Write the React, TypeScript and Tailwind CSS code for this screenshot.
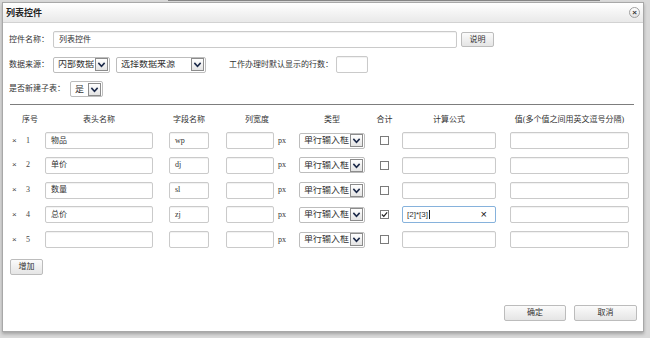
import React from "react";

const rows = [
  { n: 1, title: "物品", field: "wp", sum: false, formula: "" },
  { n: 2, title: "单价", field: "dj", sum: false, formula: "" },
  { n: 3, title: "数量", field: "sl", sum: false, formula: "" },
  { n: 4, title: "总价", field: "zj", sum: true, formula: "[2]*[3]" },
  { n: 5, title: "", field: "", sum: false, formula: "" },
];

function Chevron() {
  return (
    <svg width="9" height="9" viewBox="0 0 10 10" fill="none">
      <path d="M1.5 3.2 L5 7 L8.5 3.2" stroke="#1c2a4a" strokeWidth="1.7" />
    </svg>
  );
}

function Select({ className, text }: { className: string; text: string }) {
  return (
    <div className={`flex items-center h-[16px] border border-[#bdbdbd] rounded-[2px] bg-white pl-[4px] pr-[1px] ${className}`}>
      <span className="flex-1 text-[9px] leading-none text-[#333] whitespace-nowrap overflow-hidden">{text}</span>
      <span className="w-[13px] h-[13px] shrink-0 border border-[#8c8c8c] bg-gradient-to-b from-white to-[#e4e4e4] flex items-center justify-center">
        <Chevron />
      </span>
    </div>
  );
}

function Input({ className, value }: { className: string; value?: string }) {
  return (
    <div className={`h-[17px] border border-[#cacaca] rounded-[2px] bg-white shadow-[inset_0_1px_1px_rgba(0,0,0,0.06)] flex items-center pl-[5px] text-[8px] text-[#333] ${className}`}>
      {value}
    </div>
  );
}

function Button({ className, label }: { className: string; label: string }) {
  return (
    <div className={`border border-[#bcbcbc] rounded-[2px] bg-gradient-to-b from-[#fbfbfb] to-[#e5e5e5] flex items-center justify-center text-[8px] text-[#333] ${className}`}>
      {label}
    </div>
  );
}

function Checkbox({ checked }: { checked: boolean }) {
  return (
    <div className="w-[9px] h-[9px] border border-[#7b7b7b] bg-white flex items-center justify-center">
      {checked && (
        <svg width="7" height="7" viewBox="0 0 8 8" fill="none">
          <path d="M1 4 L3.2 6.2 L7 1.5" stroke="#222" strokeWidth="1.4" />
        </svg>
      )}
    </div>
  );
}

export default function App() {
  return (
    <div className="w-[650px] h-[338px] bg-[#d9d9d9] font-['Liberation_Serif','Noto_Sans_CJK_SC',serif] overflow-hidden">
      <div className="h-[2px] flex">
        <div className="ml-[168px] w-[432px] h-[1px] bg-[#858585]" />
      </div>
      <div className="ml-[2px] w-[642px] h-[330px] bg-white border border-[#a8a8a8] shadow-[0_2px_3px_rgba(0,0,0,0.25)] flex flex-col">
        {/* title bar */}
        <div className="h-[20px] shrink-0 flex items-center justify-between pl-[3px] pr-[3px] bg-gradient-to-b from-white to-[#e9e9e9] border-b border-[#d2d2d2]">
          <span className="text-[9px] font-bold text-[#222] font-['Noto_Sans_CJK_SC',sans-serif]">列表控件</span>
          <span className="w-[11px] h-[11px] rounded-full border border-[#a0a0a0] bg-gradient-to-b from-white to-[#e2e2e2] flex items-center justify-center text-[8px] leading-none text-[#333] font-bold font-['Liberation_Sans',sans-serif]">×</span>
        </div>

        <div className="flex-1 flex flex-col pl-[6px] pr-[6px] pt-[8px] text-[#333]">
          {/* control name */}
          <div className="flex items-center h-[17px]">
            <span className="w-[44px] text-[8px]">控件名称：</span>
            <Input className="w-[404px]" value="列表控件" />
            <Button className="ml-[4px] w-[33px] h-[15px]" label="说明" />
          </div>

          {/* data source */}
          <div className="flex items-center h-[17px] mt-[8px]">
            <span className="w-[44px] text-[8px]">数据来源：</span>
            <Select className="w-[57px]" text="内部数据" />
            <Select className="ml-[6px] w-[90px]" text="选择数据来源" />
            <span className="ml-[23px] text-[8px]">工作办理时默认显示的行数：</span>
            <Input className="ml-[3px] w-[32px]" />
          </div>

          {/* sub table */}
          <div className="flex items-center h-[16px] mt-[8px]">
            <span className="w-[61px] text-[8px]">是否新建子表：</span>
            <Select className="w-[33px]" text="是" />
          </div>

          <div className="mt-[7px] ml-[1px] w-[624px] h-[1px] bg-[#7d7d7d]" />

          {/* header */}
          <div className="flex items-center h-[16px] mt-[7px] text-[8px] pl-[1px]">
            <span className="w-[35px] pl-[12px]">序号</span>
            <span className="w-[108px] text-center">表头名称</span>
            <span className="ml-[16px] w-[40px] text-center">字段名称</span>
            <span className="ml-[17px] w-[62px] text-center">列宽度</span>
            <span className="ml-[11px] w-[66px] text-center">类型</span>
            <span className="ml-[11px] w-[17px] text-center">合计</span>
            <span className="ml-[9px] w-[94px] text-center">计算公式</span>
            <span className="ml-[14px] w-[119px] text-center">值(多个值之间用英文逗号分隔)</span>
          </div>

          {/* rows */}
          <div className="flex flex-col gap-[7.8px] mt-[4px] pl-[1px]">
            {rows.map((r) => (
              <div key={r.n} className="flex items-center h-[17px]">
                <span className="w-[35px] flex items-center text-[8px] text-[#444]">
                  <span className="ml-[2px] w-[14px] font-['Liberation_Sans',sans-serif]">×</span>
                  <span>{r.n}</span>
                </span>
                <Input className="w-[108px]" value={r.title} />
                <Input className="ml-[16px] w-[40px]" value={r.field} />
                <Input className="ml-[17px] w-[48px]" />
                <span className="ml-[4px] w-[10px] text-[8px]">px</span>
                <Select className="ml-[11px] w-[66px]" text="单行输入框" />
                <span className="ml-[15px]">
                  <Checkbox checked={r.sum} />
                </span>
                {r.formula ? (
                  <div className="ml-[13px] w-[94px] h-[17px] border border-[#86b2dc] rounded-[2px] bg-white flex items-center pl-[4px] pr-[8px] text-[8px] text-[#333] font-['Liberation_Sans',sans-serif]">
                    <span>{r.formula}</span>
                    <span className="w-px h-[9px] bg-[#222] ml-[1px]" />
                    <span className="ml-auto text-[11px] leading-none text-[#111]">×</span>
                  </div>
                ) : (
                  <Input className="ml-[13px] w-[94px]" />
                )}
                <Input className="ml-[14px] w-[119px]" />
              </div>
            ))}
          </div>

          <Button className="mt-[11px] ml-[1px] w-[33px] h-[16px]" label="增加" />

          <div className="mt-auto mb-[10px] flex justify-end gap-[8px] pr-[0px]">
            <Button className="w-[62px] h-[16px]" label="确定" />
            <Button className="w-[63px] h-[16px]" label="取消" />
          </div>
        </div>
      </div>
    </div>
  );
}
